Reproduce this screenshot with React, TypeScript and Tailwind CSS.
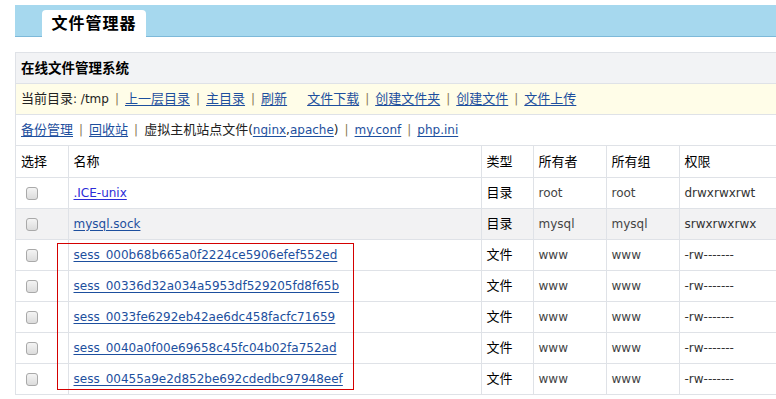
import React from "react";

type Row = {
  name: string;
  type: string;
  owner: string;
  group: string;
  perm: string;
  gray?: boolean;
  bright?: boolean;
};

const rows: Row[] = [
  { name: ".ICE-unix", type: "目录", owner: "root", group: "root", perm: "drwxrwxrwt", bright: true },
  { name: "mysql.sock", type: "目录", owner: "mysql", group: "mysql", perm: "srwxrwxrwx", gray: true },
  { name: "sess_000b68b665a0f2224ce5906efef552ed", type: "文件", owner: "www", group: "www", perm: "-rw-------" },
  { name: "sess_00336d32a034a5953df529205fd8f65b", type: "文件", owner: "www", group: "www", perm: "-rw-------" },
  { name: "sess_0033fe6292eb42ae6dc458facfc71659", type: "文件", owner: "www", group: "www", perm: "-rw-------" },
  { name: "sess_0040a0f00e69658c45fc04b02fa752ad", type: "文件", owner: "www", group: "www", perm: "-rw-------" },
  { name: "sess_00455a9e2d852be692cdedbc97948eef", type: "文件", owner: "www", group: "www", perm: "-rw-------" },
];

const font = "font-['DejaVu_Sans','Noto_Sans_CJK_SC',sans-serif]";

// chinese glyphs in the screenshot run a little wider than the latin text
function Zh({ children }: { children: React.ReactNode }) {
  return <span className="text-[13px]">{children}</span>;
}

function Link({ children, zh = true }: { children: React.ReactNode; zh?: boolean }) {
  return (
    <a className={`text-[#1d4f9e] underline underline-offset-2 ${zh ? "text-[13px]" : ""}`}>{children}</a>
  );
}

function Sep() {
  return <span className="mx-[6px] text-[#8a7a55]">|</span>;
}

function Checkbox() {
  return (
    <span className="ml-[10px] inline-block h-[13px] w-[12px] rounded-[3px] border border-[#a9a9a9] bg-gradient-to-b from-[#f4f4f4] to-[#dcdcdc] align-middle"></span>
  );
}

export default function App() {
  return (
    <div className={`relative h-[399px] w-[776px] overflow-hidden bg-white text-[12px] text-[#222] ${font}`}>
      <div className="pt-[5px] pl-[15px]">
        <div className="flex h-[32px] items-end border-b border-[#7db9d9] bg-[#a6d8ee] pl-[27px]">
          <div className="-mb-px flex h-[27px] w-[104px] items-center justify-center rounded-t-[4px] bg-white text-[16px] font-bold tracking-[1px] text-black">
            文件管理器
          </div>
        </div>
      </div>

      <div className="mt-[15px] ml-[15px] w-[800px] border-t border-l border-[#dfe2e7]">
        <div className="flex h-[31px] items-center border-b border-[#dfe2e7] bg-[#f2f3f5] pl-[5px] text-[13.5px] font-bold text-black">
          在线文件管理系统
        </div>
        <div className="flex h-[31px] items-center border-b border-[#dfe2e7] bg-[#fffde8] pl-[5px] whitespace-pre">
          <Zh>当前目录</Zh>
          <span>: /tmp</span>
          <Sep />
          <Link>上一层目录</Link>
          <Sep />
          <Link>主目录</Link>
          <Sep />
          <Link>刷新</Link>
          <span className="w-[20px]"></span>
          <Link>文件下载</Link>
          <Sep />
          <Link>创建文件夹</Link>
          <Sep />
          <Link>创建文件</Link>
          <Sep />
          <Link>文件上传</Link>
        </div>
        <div className="flex h-[31px] items-center border-b border-[#dfe2e7] pl-[5px] whitespace-pre">
          <Link>备份管理</Link>
          <Sep />
          <Link>回收站</Link>
          <Sep />
          <Zh>虚拟主机站点文件</Zh>
          <span>(</span>
          <Link zh={false}>nginx</Link>
          <span>,</span>
          <Link zh={false}>apache</Link>
          <span>)</span>
          <Sep />
          <Link zh={false}>my.conf</Link>
          <Sep />
          <Link zh={false}>php.ini</Link>
        </div>
        <table className="w-full table-fixed border-collapse">
          <colgroup>
            <col className="w-[52px]" />
            <col className="w-[413px]" />
            <col className="w-[52px]" />
            <col className="w-[73px]" />
            <col className="w-[73px]" />
            <col />
          </colgroup>
          <thead>
            <tr className="h-[31px] text-left text-[13px] text-black">
              {["选择", "名称", "类型", "所有者", "所有组", "权限"].map((h) => (
                <th key={h} className="border border-t-0 border-l-0 border-[#dfe2e7] pl-[5px] font-normal">
                  {h}
                </th>
              ))}
            </tr>
          </thead>
          <tbody>
            {rows.map((r) => (
              <tr key={r.name} className={`h-[31px] ${r.gray ? "bg-[#f2f2f3]" : "bg-white"}`}>
                <td className="border border-l-0 border-[#dfe2e7]">
                  <Checkbox />
                </td>
                <td className="border border-[#dfe2e7] pl-[5px]">
                  <a className={`underline underline-offset-2 ${r.bright ? "text-[#2c2cd8]" : "text-[#1d4f9e]"}`}>{r.name}</a>
                </td>
                <td className="border border-[#dfe2e7] pl-[5px] text-[13px] text-black">{r.type}</td>
                <td className="border border-[#dfe2e7] pl-[5px] text-[#444]">{r.owner}</td>
                <td className="border border-[#dfe2e7] pl-[5px] text-[#444]">{r.group}</td>
                <td className="border border-[#dfe2e7] pl-[5px] text-[#333]">{r.perm}</td>
              </tr>
            ))}
          </tbody>
        </table>
      </div>

      <div className="pointer-events-none absolute top-[243px] left-[57px] h-[147px] w-[297px] border border-[#d40000]"></div>
    </div>
  );
}
